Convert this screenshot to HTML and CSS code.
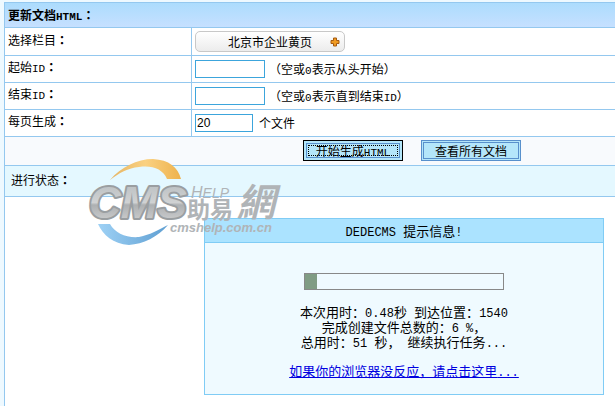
FILE: index.html
```html
<!DOCTYPE html>
<html lang="zh-CN">
<head>
  <meta charset="UTF-8">
  <meta name="viewport" content="width=device-width, initial-scale=1.0">
  <title>更新文档HTML</title>
  <link rel="stylesheet" href="styles.css">
</head>
<body>
  <main class="page">
    <form>
      <table class="form-table">
        <thead>
          <tr><th colspan="2">更新文档<span class="en">HTML</span><span class="colon" lang="zh-TW">：</span></th></tr>
        </thead>
        <tbody>
          <tr>
            <td class="label"><label for="column">选择栏目<span class="colon" lang="zh-TW">：</span></label></td>
            <td>
              <button type="button" id="column" class="picker">
                <span>北京市企业黄页</span>
                <svg width="10" height="10" viewBox="0 0 10 10" aria-hidden="true">
                  <path d="M3.5 1h3v2.500h2.500v3h-2.500v2.500h-3v-2.500h-2.500v-3h2.500z" fill="#f09a20" stroke="#a45a10"/>
                </svg>
              </button>
            </td>
          </tr>
          <tr>
            <td class="label"><label for="startid">起始<span class="en">ID</span><span class="colon" lang="zh-TW">：</span></label></td>
            <td>
              <div class="field">
                <input type="text" id="startid" name="startid">
                <span>（空或<span class="en">0</span>表示从头开始）</span>
              </div>
            </td>
          </tr>
          <tr>
            <td class="label"><label for="endid">结束<span class="en">ID</span><span class="colon" lang="zh-TW">：</span></label></td>
            <td>
              <div class="field">
                <input type="text" id="endid" name="endid">
                <span>（空或<span class="en">0</span>表示直到结束<span class="en">ID</span>）</span>
              </div>
            </td>
          </tr>
          <tr>
            <td class="label"><label for="pagesize">每页生成<span class="colon" lang="zh-TW">：</span></label></td>
            <td>
              <div class="field count">
                <input type="text" id="pagesize" name="pagesize" value="20">
                <span>个文件</span>
              </div>
            </td>
          </tr>
        </tbody>
      </table>
      <div class="actions">
        <button type="submit" class="btn btn-active"><span>开始生成<span class="en">HTML</span></span></button>
        <button type="button" class="btn"><span>查看所有文档</span></button>
      </div>
    </form>

    <div class="status">进行状态<span class="colon" lang="zh-TW">：</span></div>

    <section class="result">
      <div class="message">
        <h2><span class="en">DEDECMS </span>提示信息<span class="en">!</span></h2>
        <div class="message-body">
          <div class="progress"><div class="progress-bar" style="width: 6%"></div></div>
          <p>
            本次用时：<span class="en">0.48</span>秒<span class="en"> </span>到达位置：<span class="en">1540</span><br>
            完成创建文件总数的：<span class="en">6 %</span>，<br>
            总用时：<span class="en">51 </span>秒，<span class="en"> </span>继续执行任务<span class="en">...</span>
          </p>
          <a href="#">如果你的浏览器没反应，请点击这里<span class="en">...</span></a>
        </div>
      </div>
    </section>

    <!-- 水印 -->
    <svg class="watermark" width="200" height="95" viewBox="85 155 200 95">
      <defs>
        <linearGradient id="metal" x1="0" y1="0" x2="0" y2="1">
          <stop offset="0.2" stop-color="#c0c4c6"/>
          <stop offset="0.5" stop-color="#d0d2d3"/>
          <stop offset="0.55" stop-color="#adb0b2"/>
          <stop offset="0.85" stop-color="#c9cacb"/>
        </linearGradient>
        <linearGradient id="gold" x1="0" y1="0" x2="1" y2="0">
          <stop offset="0" stop-color="#e5b464"/>
          <stop offset="0.5" stop-color="#fad181"/>
          <stop offset="1" stop-color="#eeb24d"/>
        </linearGradient>
        <linearGradient id="sky" x1="0" y1="0" x2="1" y2="0">
          <stop offset="0" stop-color="#9ed1f5"/>
          <stop offset="1" stop-color="#5f9fd2"/>
        </linearGradient>
      </defs>
      <path d="M110 180C121 167 137 159 153 159C169 160 178 167 181 179H167C163 169 152 165 139 167C128 168 119 173 110 180Z" fill="url(#gold)"/>
      <path d="M98 224H110C115 233 126 238 139 237C150 235 160 229 168 225C158 237 143 244 129 245C113 244 103 235 98 224Z" fill="url(#sky)"/>
      <text class="wm-cms" x="89" y="218" fill="url(#metal)">CMS</text>
      <text class="wm-help" x="191" y="198"><tspan class="wm-cap">H</tspan>ELP</text>
      <text class="wm-name" x="187" y="218">助易</text>
      <text class="wm-net" x="237" y="216">網</text>
      <text class="wm-url" x="170" y="232">cmshelp.com.cn</text>
    </svg>
  </main>
</body>
</html>
```
FILE: styles.css
```css
:root {
  --line: #94c8ef;
  --cjk: "Noto Sans CJK SC", sans-serif;
}

* {
  box-sizing: border-box;
}

body {
  margin: 0;
  padding: 2px 0 0 4px;
  background: #eef9ff;
  font: 12px/16px var(--cjk);
  color: #000;
}

.page {
  position: relative;
  min-height: calc(100vh - 2px);
  border-left: 1px solid var(--line);
  background: #fff;
}

button,
input {
  font: inherit;
  color: inherit;
}

/* 英文和数字占半个汉字宽 */
.en {
  font-family: "Liberation Mono", monospace;
  font-size: 11px;
  line-height: 0;
  white-space: pre;
}

/* 居中的冒号 */
.colon {
  font-family: "Noto Sans CJK TC", sans-serif;
  font-weight: bold;
}

/* 表单 */
.form-table {
  width: 100%;
  border-collapse: separate;
  border-spacing: 0;
  border-top: 1px solid var(--line);
}

.form-table th,
.form-table td {
  height: 27px;
  padding: 0 3px;
  border-bottom: 1px solid var(--line);
}

.form-table th {
  height: 25px;
  text-align: left;
  background: linear-gradient(#acdcfd, #c6e0ff);
}

.form-table .label {
  width: 187px;
  padding-bottom: 4px;
  border-right: 1px solid var(--line);
}

.form-table tbody tr:first-child td {
  height: 28px;
}

.picker {
  display: flex;
  align-items: center;
  justify-content: space-between;
  width: 150px;
  height: 21px;
  padding: 0 4px 0 32px;
  border: 1px solid #c8c8c8;
  border-radius: 5px;
  background: linear-gradient(#fff, #ececec);
}

.field {
  display: flex;
  align-items: center;
  gap: 4px;
}

.field input {
  width: 70px;
  height: 18px;
  padding: 0 1px;
  border: 1px solid #3ca5dc;
  background: #fff;
}

.count {
  gap: 6px;
}

.count input {
  width: 58px;
  font-family: "Liberation Sans", Arial, sans-serif;
}

.actions {
  display: flex;
  gap: 18px;
  height: 29px;
  padding: 3px 0 0 298px;
  border-bottom: 1px solid var(--line);
  background: #f8fafd;
}

.btn {
  width: 100px;
  height: 21px;
  padding: 0;
  border: 3px double #5890cc;
  background: #b4e6fa;
  line-height: 15px;
}

.btn-active {
  padding: 1px;
  outline: 1px solid #000;
  outline-offset: -1px;
  border-width: 4px;
  line-height: 9px;
}

.btn-active > span {
  display: block;
  border: 1px dotted #000;
}

.status {
  height: 31px;
  padding: 6px;
  border-bottom: 1px solid var(--line);
  background: #e4f8ff;
}

/* 提示信息 */
.result {
  display: flex;
  justify-content: flex-end;
  padding: 21px 11px 10px;
}

.message {
  width: 400px;
  border: 1px solid #80ccf5;
  background: #effaff;
  font-size: 13px;
  line-height: 15px;
  text-align: center;
}

.message .en {
  font-size: 12px;
}

.message h2 {
  margin: 0;
  padding: 4px 0;
  border-bottom: 1px solid #80ccf5;
  background: #abe3ff;
  font-size: 13px;
  font-weight: normal;
  line-height: 15px;
}

.message-body {
  padding: 30px 0 16px;
}

.message p {
  margin: 14px 0;
}

.message a {
  color: #0000e0;
}

.progress {
  width: 200px;
  height: 17px;
  margin: 0 auto;
  border: 1px solid #888;
}

.progress-bar {
  height: 100%;
  background: #809c84;
}

/* 水印 */
.watermark {
  position: absolute;
  left: 80px;
  top: 153px;
  pointer-events: none;
}

.wm-cms {
  font: italic bold 44px "Liberation Sans", Arial, sans-serif;
  stroke: #9a9ea1;
  stroke-width: 4px;
  stroke-linejoin: round;
  paint-order: stroke;
}

.wm-help,
.wm-name,
.wm-net,
.wm-url {
  fill: #b0b4b7;
}

.wm-help {
  font: italic 14px "Liberation Sans", Arial, sans-serif;
}

.wm-cap {
  font-size: 16px;
}

.wm-name {
  font: bold 23px var(--cjk);
}

.wm-net {
  font: italic bold 38px var(--cjk);
}

.wm-url {
  font: italic bold 13px "Liberation Sans", Arial, sans-serif;
}
```
